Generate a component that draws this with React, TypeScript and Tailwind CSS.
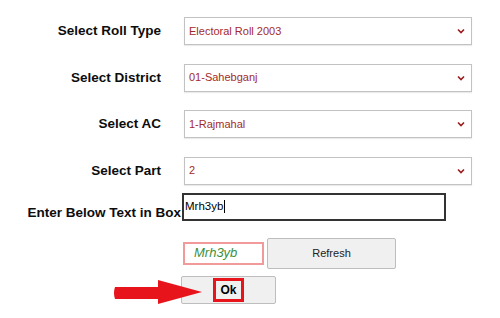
import type { ReactNode } from 'react'

const labelCls = "text-right font-bold text-[13.5px] leading-[16px] text-[#0d0d0d] font-['Liberation_Sans',Arial,sans-serif]"

function Chevron() {
  return (
    <svg width="8" height="6" viewBox="0 0 8 6" className="shrink-0">
      <path d="M1 1.5 L4 4.5 L7 1.5" fill="none" stroke="#9b1c1c" strokeWidth="1.6" />
    </svg>
  )
}

function SelectRow({ label, value }: { label: string; value: ReactNode }) {
  return (
    <div className="flex items-center h-[28px]">
      <div className={`w-[161px] ${labelCls}`}>{label}</div>
      <div className="ml-[23px] w-[288px] h-full bg-white border border-[#c2c2c2] shadow-[0_1px_1px_rgba(0,0,0,0.08)] flex items-center justify-between pl-[4px] pr-[6px]">
        <span className="text-[11px] text-[#a52a2a]">{value}</span>
        <Chevron />
      </div>
    </div>
  )
}

export default function App() {
  return (
    <div className="w-[500px] h-[318px] bg-white overflow-hidden font-['Liberation_Sans',Arial,sans-serif]">
      <div className="flex flex-col pt-[17px]">
        {/* Dropdowns */}
        <div className="flex flex-col gap-[18.5px]">
          <SelectRow label="Select Roll Type" value="Electoral Roll 2003" />
          <SelectRow label="Select District" value="01-Sahebganj" />
          <SelectRow label="Select AC" value="1-Rajmahal" />
          <SelectRow label="Select Part" value="2" />
        </div>

        {/* Captcha input */}
        <div className="flex items-end h-[28px] mt-[8px]">
          <div className={`w-[181px] ${labelCls}`}>Enter Below Text in Box</div>
          <div className="ml-[1px] w-[264px] h-full border-2 border-[#333] flex items-center pl-[1px]">
            <span className="text-[11.5px] text-black">Mrh3yb</span>
            <span className="w-px h-[13px] bg-black ml-[1px]" />
          </div>
        </div>

        {/* Captcha image + refresh */}
        <div className="flex items-center h-[31px] mt-[17px] pl-[183px] gap-[3px]">
          <div className="w-[81px] h-[23px] border-2 border-[#f29a9a] flex items-center pl-[9px]">
            <span className="italic text-[13px] text-[#3d8f3d]">Mrh3yb</span>
          </div>
          <button className="w-[129px] h-full bg-[#f0f0f0] border border-[#bdbdbd] rounded-[2px] text-[11px] text-[#222]">
            Refresh
          </button>
        </div>

        {/* Ok */}
        <div className="relative flex items-center h-[28px] mt-[7px] pl-[181px]">
          <svg width="90" height="25" viewBox="0 0 90 25" className="absolute left-[113px] top-[4px]">
            <path d="M2 7 L45 7 L45 0 L89 12 L45 24 L45 19 L2 19 Q0 13 2 7 Z" fill="#e8141c" />
          </svg>
          <button className="w-[95px] h-full bg-[#f0f0f0] border border-[#bdbdbd] rounded-[2px] flex items-center justify-center">
            <span className="w-[31px] h-[24px] border-[3px] border-[#e8141c] flex items-center justify-center text-[12px] font-bold text-black">
              Ok
            </span>
          </button>
        </div>
      </div>
    </div>
  )
}
